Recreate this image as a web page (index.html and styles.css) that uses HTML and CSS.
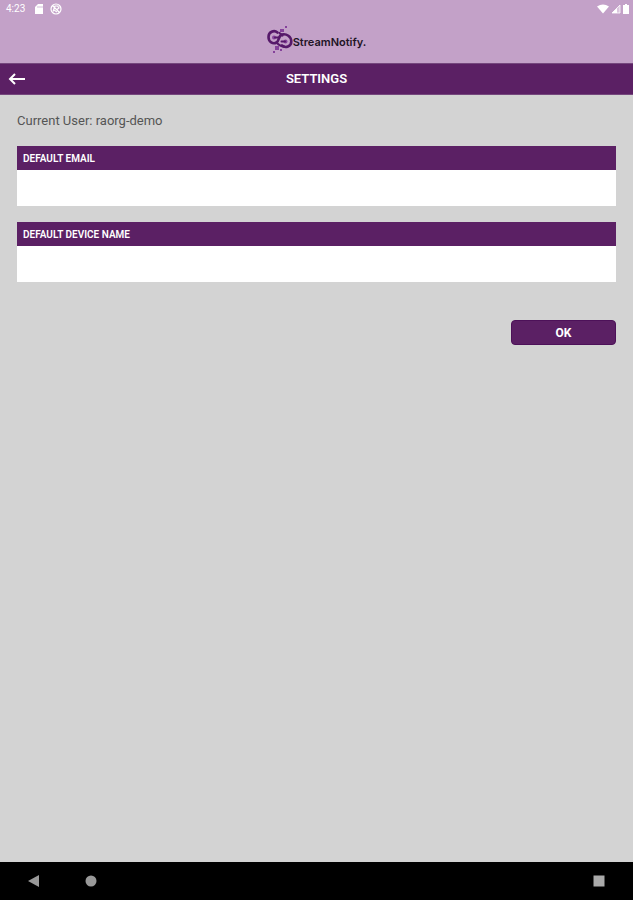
FILE: index.html
```html
<!DOCTYPE html>
<html lang="en">
<head>
<meta charset="utf-8">
<meta name="viewport" content="width=device-width, initial-scale=1">
<title>StreamNotify Settings</title>
<link rel="stylesheet" href="styles.css">
</head>
<body>
<header class="top">
  <div class="status">
    <div class="status-group">
      <span class="time">4:23</span>
      <svg width="10" height="12" viewBox="0 0 10 12"><path d="M4 1h5v10H1V4z" fill="#fff"/><path d="M4 3v2M6 3v2M8 3v2" stroke="#c3a1c8" stroke-width=".7"/></svg>
      <svg width="12" height="12" viewBox="0 0 12 12" fill="none" stroke="#fff"><circle cx="6" cy="6" r="5" stroke-width="1.2"/><path d="M2.500 2.500l7 7M3 8.500L5 3h2.500l1.500 2-2 1.500M4 7l3 2" stroke-width="1.200"/></svg>
    </div>
    <div class="status-group status-right">
      <svg width="12" height="10" viewBox="0 0 12 10"><path d="M0 2.500Q6-1.500 12 2.500L6 9.500z" fill="#fff"/></svg>
      <svg width="10" height="10" viewBox="0 0 10 10"><path d="M1 9L9 1v8z" fill="#fff" fill-opacity=".4" stroke="#fff" stroke-width=".8"/><path d="M1 9l5-5v5z" fill="#fff"/></svg>
      <svg width="6" height="10" viewBox="0 0 6 10"><path d="M0 1h2V0h2v1h2v9H0z" fill="#fff"/></svg>
    </div>
  </div>
  <div class="brand">
    <svg width="26" height="28" viewBox="0 0 26 28" fill="none" stroke-linecap="round">
      <path d="M10.500 6.500C7 3.500 1.500 6 1.500 11C1.500 16 6 18.500 9.500 16.500C12.500 14.500 11 10 15 8.500C19.500 7.500 24.300 10.500 24.300 15.500C24.300 20.500 18.500 22.500 15 19.500" stroke="#56196a" stroke-width="2.600"/>
      <path d="M9.500 16.500C12 19 14 21 17 20.500M15.500 9.500L12.500 7" stroke="#56196a" stroke-width="2.200"/>
      <circle cx="7" cy="11.500" r="2" fill="#85429b"/>
      <path d="M8 11.500h3.500" stroke="#56196a" stroke-width="2"/>
      <circle cx="18.500" cy="15.500" r="2" fill="#85429b"/>
      <path d="M14.500 15.500h3.500" stroke="#56196a" stroke-width="2"/>
      <g fill="#85429b"><path d="M13 3h4v3h-4zM18 0h2v2h-2zM8 20h4v4H8zM6 25h2v2H6zM13 23h2v2h-2z"/></g>
    </svg>
    <span class="brand-name">StreamNotify.</span>
  </div>
</header>
<nav class="bar">
  <button class="back" type="button" aria-label="Back">
    <svg width="18" height="12" viewBox="0 0 18 12" fill="none" stroke="#fff" stroke-width="2"><path d="M17 6H2M7 1L2 6l5 5"/></svg>
  </button>
  <h1 class="title">SETTINGS</h1>
</nav>
<main class="content">
  <p class="user">Current User: raorg-demo</p>
  <form class="form">
    <div class="field">
      <label class="label" for="email">DEFAULT EMAIL</label>
      <input class="input" id="email" type="email">
    </div>
    <div class="field">
      <label class="label" for="device">DEFAULT DEVICE NAME</label>
      <input class="input" id="device" type="text">
    </div>
    <button class="ok" type="button">OK</button>
  </form>
</main>
<footer class="system">
  <button class="key" type="button" aria-label="System back"><svg width="12" height="12" viewBox="0 0 12 12"><path d="M0 6L11 0v12z" fill="#999"/></svg></button>
  <button class="key" type="button" aria-label="Home"><svg width="12" height="12" viewBox="0 0 12 12"><circle cx="6" cy="6" r="5.500" fill="#999"/></svg></button>
  <button class="key recents" type="button" aria-label="Recent apps"><svg width="12" height="12" viewBox="0 0 12 12"><path d="M.5.500h11v11H.5z" fill="#aaa"/></svg></button>
</footer>
</body>
</html>
```
FILE: styles.css
```css
* { box-sizing: border-box; }
body {
  margin: 0;
  min-height: 100vh;
  display: flex;
  flex-direction: column;
  background: #d3d3d3;
  font-family: Roboto, sans-serif;
}
svg { display: block; flex: none; }
button {
  border: 0;
  padding: 0;
  background: none;
  font: inherit;
}
.top {
  display: flex;
  flex-direction: column;
  height: 63px;
  background: #c3a1c8;
}
.status {
  display: flex;
  justify-content: space-between;
  padding: 3px 4px 0 6px;
}
.status-group {
  display: flex;
  align-items: center;
  gap: 6px;
  height: 12px;
}
.status-right { gap: 2px; }
.time {
  width: 22px;
  color: #fff;
  font-size: 10px;
  line-height: 12px;
}
.brand {
  display: flex;
  align-items: center;
  justify-content: center;
  padding-top: 11px;
}
.brand-name {
  color: #211426;
  font: 600 11px/16px Inter, sans-serif;
  padding-top: 4px;
}
.bar {
  display: grid;
  grid-template-columns: 34px 1fr 34px;
  align-items: center;
  height: 32px;
  background: #5b2064;
  border-top: 1px solid #75477d;
  border-bottom: 1px solid #75477d;
}
.back { padding-left: 8px; }
.title {
  margin: 0;
  color: #fff;
  font-size: 13px;
  font-weight: 600;
  line-height: 16px;
  text-align: center;
}
.content {
  flex: 1;
  padding: 18px 17px;
}
.user {
  margin: 0 0 17px;
  color: #555;
  font-size: 13px;
  line-height: 16px;
}
.form {
  display: flex;
  flex-direction: column;
}
.field {
  display: flex;
  flex-direction: column;
  margin-bottom: 16px;
}
.label {
  padding: 1px 6px 0;
  background: #5b2064;
  color: #fff;
  font-size: 10px;
  font-weight: 600;
  line-height: 23px;
}
.input {
  width: 100%;
  height: 36px;
  border: 0;
  padding: 0 6px;
  background: #fff;
  font: 12px Roboto, sans-serif;
}
.ok {
  align-self: flex-end;
  width: 105px;
  height: 25px;
  margin-top: 22px;
  border: 1px solid #4d1159;
  border-radius: 4px;
  background: #5b2064;
  color: #fff;
  font-size: 12px;
  font-weight: 700;
}
.system {
  display: flex;
  align-items: center;
  gap: 45px;
  height: 38px;
  padding: 0 28px;
  background: #000;
}
.recents { margin-left: auto; }
```
